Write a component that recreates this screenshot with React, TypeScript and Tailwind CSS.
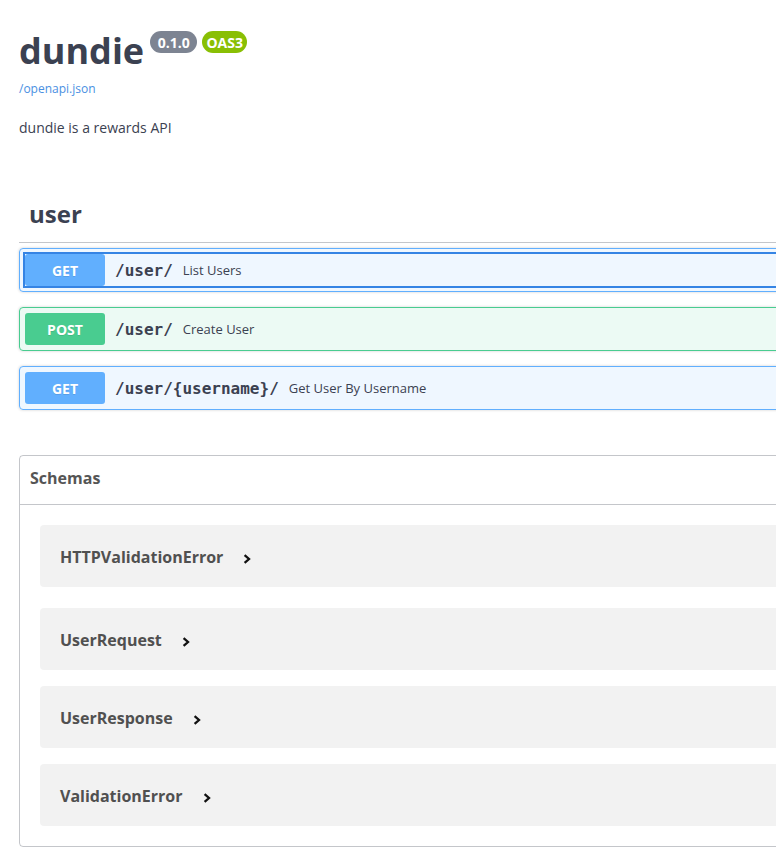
import React from "react";

const sans = { fontFamily: '"Open Sans", "Noto Sans", sans-serif' };
const mono = { fontFamily: '"DejaVu Sans Mono", "Liberation Mono", monospace' };

type Op = { method: "GET" | "POST"; path: string; summary: string; focused?: boolean };

const ops: Op[] = [
  { method: "GET", path: "/user/", summary: "List Users", focused: true },
  { method: "POST", path: "/user/", summary: "Create User" },
  { method: "GET", path: "/user/{username}/", summary: "Get User By Username" },
];

function OpBlock({ op }: { op: Op }) {
  const isGet = op.method === "GET";
  return (
    <div
      className={
        "rounded-[4px] border shadow-[0_0_3px_rgba(0,0,0,0.19)] " +
        (isGet
          ? "border-[#61affe] bg-[rgba(97,175,254,0.1)]"
          : "border-[#49cc90] bg-[rgba(73,204,144,0.1)]")
      }
    >
      <div className="relative flex items-center p-[5px]">
        {op.focused && (
          <div className="pointer-events-none absolute inset-[3px] border-2 border-[#3584e4]" />
        )}
        <div
          className={
            "flex h-[32px] w-[80px] shrink-0 items-center justify-center rounded-[3px] text-[14px] font-bold text-white [text-shadow:0_1px_0_rgba(0,0,0,0.1)] " +
            (isGet ? "bg-[#61affe]" : "bg-[#49cc90]")
          }
        >
          {op.method}
        </div>
        <span className="px-[10px] pt-[2px] text-[16px] font-bold text-[#3b4151]" style={mono}>
          {op.path}
        </span>
        <span className="pt-[2px] text-[13px] text-[#3b4151]">{op.summary}</span>
      </div>
    </div>
  );
}

function Chevron() {
  return (
    <svg width="8" height="10" viewBox="0 0 8 10" className="ml-[20px] mt-[3px] shrink-0">
      <path d="M1.6 1.2 L6 5 L1.6 8.8" fill="none" stroke="#111" strokeWidth="2.3" strokeLinecap="butt" />
    </svg>
  );
}

const schemas = [
  { name: "HTTPValidationError", mb: "mb-[21px]" },
  { name: "UserRequest", mb: "mb-[16px]" },
  { name: "UserResponse", mb: "mb-[16px]" },
  { name: "ValidationError", mb: "mb-[20px]" },
];

export default function App() {
  return (
    <div className="min-h-[863px] w-full overflow-hidden bg-white" style={sans}>
      <div className="w-[1240px] px-[19px] pb-[20px]">
        {/* Info */}
        <div className="flex items-start pt-[26px]">
          <h1 className="text-[36px] font-bold leading-[49px] text-[#3b4151]">dundie</h1>
          <span className="ml-[6px] mt-[5px] flex h-[22px] w-[47px] items-center justify-center rounded-full bg-[#7d8492] text-[14px] font-bold text-white">
            0.1.0
          </span>
          <span className="ml-[5px] mt-[5px] flex h-[22px] w-[45px] items-center justify-center rounded-full bg-[#89bf04] text-[14px] font-bold text-white">
            OAS3
          </span>
        </div>
        <div className="mt-[6px] text-[12px] leading-[16px] text-[#4990e2]">/openapi.json</div>
        <div className="mt-[21px] text-[14px] leading-[20px] text-[#3b4151]">dundie is a rewards API</div>

        {/* Tag */}
        <div className="mt-[50px] border-b border-[rgba(59,65,81,0.3)] pb-[12px] pl-[10px] pt-[10px] text-[24px] font-bold leading-[32px] text-[#3b4151]">
          user
        </div>
        <div className="mt-[5px] flex flex-col gap-[15px]">
          {ops.map((op, i) => (
            <OpBlock key={i} op={op} />
          ))}
        </div>

        {/* Schemas */}
        <div className="mt-[45px] rounded-[4px] border border-[rgba(59,65,81,0.3)]">
          <div className="border-b border-[rgba(59,65,81,0.3)] px-[10px] pb-[12px] pt-[8px] text-[16px] font-bold leading-[28px] text-[#555555]">
            Schemas
          </div>
          <div className="px-[20px] pt-[20px]">
            {schemas.map((s) => (
              <div
                key={s.name}
                className={"flex h-[62px] items-center rounded-[4px] bg-[rgba(0,0,0,0.05)] px-[20px] pt-[2px] " + s.mb}
              >
                <span className="text-[16px] font-bold text-[#505050]">{s.name}</span>
                <Chevron />
              </div>
            ))}
          </div>
        </div>
      </div>
    </div>
  );
}
